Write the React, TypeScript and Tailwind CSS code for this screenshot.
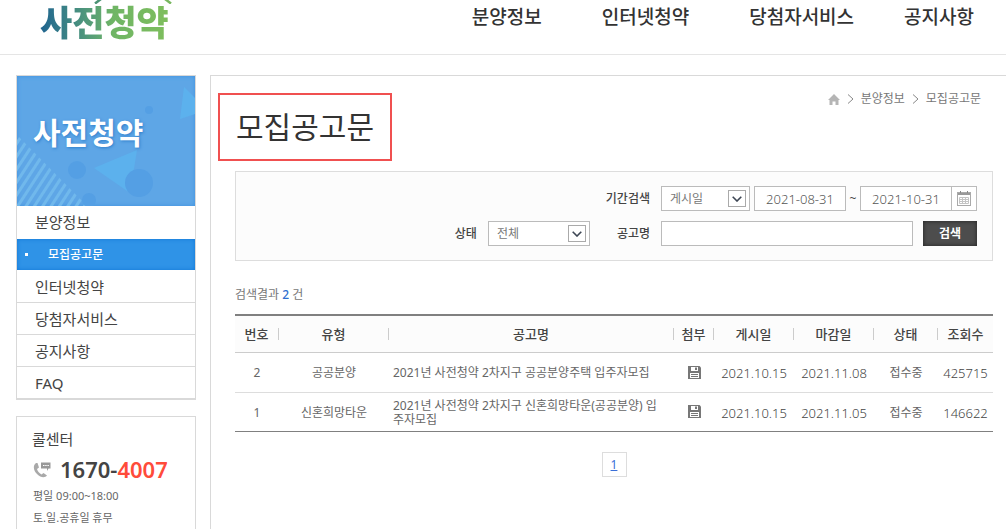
import React from 'react'
import clsx from 'clsx'

const navItems = ['분양정보', '인터넷청약', '당첨자서비스', '공지사항']

const sideItems = ['인터넷청약', '당첨자서비스', '공지사항', 'FAQ']

const notices = [
  {
    no: 2,
    type: '공공분양',
    title: '2021년 사전청약 2차지구 공공분양주택 입주자모집',
    posted: '2021.10.15',
    closing: '2021.11.08',
    status: '접수중',
    views: 425715,
  },
  {
    no: 1,
    type: '신혼희망타운',
    title: '2021년 사전청약 2차지구 신혼희망타운(공공분양) 입주자모집',
    posted: '2021.10.15',
    closing: '2021.11.05',
    status: '접수중',
    views: 146622,
  },
]

const columns = [
  { label: '번호', width: 'w-[44px]' },
  { label: '유형', width: 'w-[110px]' },
  { label: '공고명', width: 'w-auto' },
  { label: '첨부', width: 'w-[40px]' },
  { label: '게시일', width: 'w-[80px]' },
  { label: '마감일', width: 'w-[80px]' },
  { label: '상태', width: 'w-[64px]' },
  { label: '조회수', width: 'w-[55px]' },
]

function Header() {
  return (
    <header className="flex h-[55px] items-start justify-between border-b border-[#e5e5e5] pl-10 pr-8">
      <a href="#" className="flex flex-col">
        <svg viewBox="0 0 132 4" className="h-1 w-[132px]" fill="none" strokeWidth="2.5">
          <path d="M55 3.500L61 -1" stroke="#4b9274" />
          <path d="M125 -1L131 3.500" stroke="#78b75f" />
        </svg>
        <span className="bg-linear-to-r from-[#1f638f] via-[#6fb565] via-55% to-[#7fbe5c] bg-clip-text text-[35px] font-black leading-[37px] text-transparent">
          사전청약
        </span>
      </a>
      <nav className="flex text-[19px] font-medium leading-[34px] text-[#333]">
        {navItems.map((item, i) => (
          <a key={item} href="#" className={clsx(i === 3 ? 'ml-[50px]' : i > 0 && 'ml-[60px]')}>
            {item}
          </a>
        ))}
      </nav>
    </header>
  )
}

function SideBanner() {
  return (
    <div className="relative flex h-[130px] items-center overflow-hidden bg-[#5ea6e6] pl-4 shadow-[inset_0_0_4px_#3f92e0]">
      <svg viewBox="0 0 178 130" className="absolute inset-0 h-full w-full">
        <defs>
          <pattern id="stripes" width="7" height="7" patternUnits="userSpaceOnUse" patternTransform="rotate(33)">
            <rect width="3" height="7" fill="#70b8ec" />
          </pattern>
        </defs>
        <path d="M0 59L70 130H0Z" fill="url(#stripes)" />
        <path d="M77 92L120 74L113 117Z" fill="#5cb1ed" />
        <path d="M167 11L178 22V38L163 43Z" fill="#5cb1ed" />
        <circle cx="60" cy="94" r="9" fill="#549fe4" />
        <circle cx="72" cy="124" r="7" fill="#549fe4" />
        <circle cx="122" cy="107" r="14" fill="#549fe4" />
        <circle cx="132" cy="34" r="4" fill="#549fe4" />
      </svg>
      <h2 className="relative pb-4 text-[30px] font-bold leading-9 text-white [text-shadow:1px_1px_3px_#2f7fcb]">
        사전청약
      </h2>
    </div>
  )
}

function Sidebar() {
  return (
    <aside className="w-[180px] shrink-0">
      <div className="border border-b-2 border-[#d9d9d9]">
        <SideBanner />
        <ul className="text-[15px] leading-8 text-[#444]">
          <li className="pb-px">
            <a href="#" className="block h-[33px] pl-[18px]">분양정보</a>
            <a
              href="#"
              className="flex h-[31px] items-center bg-[#2f93e7] pl-2 text-[12px] font-medium text-white shadow-[inset_0_0_4px_#1177d8]"
            >
              <span className="mr-5 h-[3px] w-[3px] bg-white" />
              모집공고문
            </a>
          </li>
          {sideItems.map((item) => (
            <li key={item} className="border-b border-[#d9d9d9] last:border-b-0">
              <a href="#" className="block h-[31px] pl-[18px]">{item}</a>
            </li>
          ))}
        </ul>
      </div>

      <section className="mt-4 border border-[#d9d9d9] px-[15px] pb-5 pt-2">
        <h3 className="text-[15px] leading-7 text-[#444]">콜센터</h3>
        <p className="flex items-center text-[22px] font-semibold leading-8 text-[#444]">
          <svg viewBox="0 0 20 18" className="mr-2 mt-px h-[18px] w-5">
            <path
              d="M4 2C1 4 1 9 5 13C9 17 13 17 15 14.500L11.500 12L9.500 13.500C7 12 5.500 10 5 8L7 6.500L5.500 2Z"
              fill="#a9a9a9"
            />
            <path d="M9 1.500H18.500V7.500H16.500L15 10V7.500H9Z" fill="#999" />
            <path d="M11 4.500h1.500M13.200 4.500h1.500M15.400 4.500h1.500" stroke="#fff" />
          </svg>
          1670-<span className="text-[#ff4b3a]">4007</span>
        </p>
        <p className="pl-px text-[11px] leading-[22px] text-[#666]">평일 09:00~18:00</p>
        <p className="pl-px text-[11px] leading-[22px] text-[#666]">토.일.공휴일 휴무</p>
      </section>
    </aside>
  )
}

function Breadcrumb() {
  return (
    <nav className="flex items-center gap-1.5 pt-3.5 text-[12px] leading-[18px] text-[#777]">
      <svg viewBox="0 0 12 11" className="h-[11px] w-3" fill="#b5b5b5">
        <path d="M6 0L12 6H10.500V11H7.500V7.500H4.500V11H1.500V6H0Z" />
      </svg>
      <Separator />
      <a href="#">분양정보</a>
      <Separator />
      <a href="#">모집공고문</a>
    </nav>
  )
}

function Separator() {
  return (
    <svg viewBox="0 0 7 10" className="mx-px h-2.5 w-[7px]" fill="none" stroke="#888">
      <path d="M1 .5L6 5L1 9.500" />
    </svg>
  )
}

interface SelectBoxProps {
  id: string
  options: string[]
  className: string
}

function SelectBox({ id, options, className }: SelectBoxProps) {
  return (
    <div className={clsx('relative h-[25px]', className)}>
      <select id={id} className="h-full w-full appearance-none border border-[#bbb] bg-white pl-2 text-[12px] text-[#777]">
        {options.map((o) => (
          <option key={o}>{o}</option>
        ))}
      </select>
      <span className="pointer-events-none absolute right-1 top-1 flex h-[17px] w-[18px] items-center justify-center border border-[#aaa] bg-white">
        <svg viewBox="0 0 10 6" className="h-1.5 w-2.5" fill="none" stroke="#3d4654" strokeWidth="1.6">
          <path d="M.7 .7L5 5L9.300 .7" />
        </svg>
      </span>
    </div>
  )
}

function SearchForm() {
  const dateInput = 'h-[25px] w-[92px] border border-[#bbb] bg-white text-center text-[13px] font-light text-[#555]'
  return (
    <form
      className="flex flex-col items-end gap-2.5 border border-[#ddd] bg-[#fcfcfc] px-[15px] py-3.5 text-[12px] text-[#444]"
      onSubmit={(e) => e.preventDefault()}
    >
      <div className="flex items-center">
        <label htmlFor="period" className="mr-[11px] font-medium">기간검색</label>
        <SelectBox id="period" options={['게시일', '마감일']} className="w-[89px]" />
        <input type="text" aria-label="시작일" defaultValue="2021-08-31" className={clsx(dateInput, 'ml-1')} />
        <span className="w-3.5 text-center">~</span>
        <input type="text" aria-label="종료일" defaultValue="2021-10-31" className={dateInput} />
        <button
          type="button"
          aria-label="달력"
          className="flex h-[25px] w-[25px] items-center justify-center border border-l-0 border-[#bbb] bg-white"
        >
          <svg viewBox="0 0 14 15" className="h-[15px] w-3.5" fill="none" stroke="#aaa">
            <rect x=".5" y="1.500" width="13" height="13" />
            <path d="M1 3H13" stroke="#999" strokeWidth="2" />
            <path d="M3.500 0V2M10.500 0V2" stroke="#888" />
            <path d="M2.500 6.500H11.500V12.500H2.500ZM2.500 8.500H11.500M2.500 10.500H11.500M5.500 6V13M8.500 6V13" stroke="#c4c4c4" />
          </svg>
        </button>
      </div>
      <div className="flex items-center">
        <label htmlFor="status" className="mr-[11px] font-medium">상태</label>
        <SelectBox id="status" options={['전체', '접수중', '마감']} className="w-[102px]" />
        <label htmlFor="keyword" className="ml-[27px] mr-[11px] font-medium">공고명</label>
        <input id="keyword" type="text" className="h-[25px] w-[252px] border border-[#bbb] bg-white px-2" />
        <button
          type="submit"
          className="ml-2.5 h-[25px] w-[54px] bg-[#4d4d4d] font-bold text-white shadow-[inset_0_0_4px_#222]"
        >
          검색
        </button>
      </div>
    </form>
  )
}

function FileIcon() {
  return (
    <svg viewBox="0 0 13 13" className="h-[13px] w-[13px]">
      <path d="M0 0H11.500L13 1.500V13H0Z" fill="#777" />
      <path d="M3 1H10V5H3Z" fill="#fff" />
      <path d="M7 1.500H9V4H7Z" fill="#777" />
      <path d="M2 7H11V12H2Z" fill="#fff" />
      <path d="M3 8.500H10M3 10.500H10" stroke="#777" />
    </svg>
  )
}

function NoticeTable() {
  return (
    <table className="w-full table-fixed border-b border-t-2 border-[#808080] text-center text-[12px] text-[#666]">
      <thead className="bg-[#fcfcfc] text-[13px] text-[#444]">
        <tr className="h-[37px] border-b border-[#ccc]">
          {columns.map((col, i) => (
            <th key={col.label} className={clsx('p-0 font-medium', col.width)}>
              <div className={clsx('h-3 leading-3', i < columns.length - 1 && 'border-r border-[#ccc]')}>
                {col.label}
              </div>
            </th>
          ))}
        </tr>
      </thead>
      <tbody>
        {notices.map((n) => (
          <tr key={n.no} className="h-10 border-t border-[#ddd] leading-3.5 last:h-[39px]">
            <td className="pt-0.5">{n.no}</td>
            <td className="pt-0.5">{n.type}</td>
            <td className="break-all pl-1 pr-2 pt-0.5 text-left">
              <a href="#">{n.title}</a>
            </td>
            <td>
              <button type="button" aria-label="첨부파일" className="mx-auto block">
                <FileIcon />
              </button>
            </td>
            <td className="pt-0.5 text-[13px] font-light text-[#444]">{n.posted}</td>
            <td className="pt-0.5 text-[13px] font-light text-[#444]">{n.closing}</td>
            <td className="pt-0.5">{n.status}</td>
            <td className="pt-0.5 text-[13px] font-light text-[#444]">{n.views}</td>
          </tr>
        ))}
      </tbody>
    </table>
  )
}

export default function App() {
  return (
    <div className="bg-white font-['Noto_Sans','Noto_Sans_CJK_KR',sans-serif]">
      <Header />
      <div className="flex items-start gap-3.5 pl-4 pt-5">
        <Sidebar />
        <main className="min-w-0 flex-1 self-stretch border-l border-t border-[#d9d9d9] pl-[7px] pr-[13px]">
          <div className="flex items-start justify-between pr-3">
            <h1 className="mt-[17px] border-2 border-[#f05050] px-4 text-[30px] leading-[64px] text-[#333]">
              모집공고문
            </h1>
            <Breadcrumb />
          </div>
          <div className="pl-[17px] pt-2.5">
            <SearchForm />
            <p className="pb-[9px] pt-6 text-[12px] leading-5 text-[#777]">
              검색결과 <span className="font-medium text-[#2f6fd0]">2</span> 건
            </p>
            <NoticeTable />
            <div className="flex justify-center pt-5">
              <a
                href="#"
                className="h-[25px] w-[25px] border border-[#ddd] text-center text-[12px] leading-6 text-[#3a6fd8] underline"
              >
                1
              </a>
            </div>
          </div>
        </main>
      </div>
    </div>
  )
}
